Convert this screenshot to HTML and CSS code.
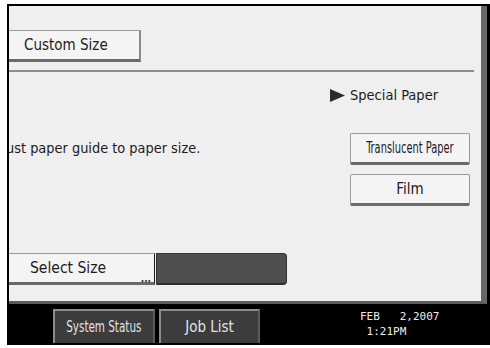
FILE: index.html
```html
<!DOCTYPE html>
<html lang="en">
<head>
    <meta charset="UTF-8">
    <title>Paper Size</title>
    <link rel="stylesheet" href="styles.css">
</head>
<body>
    <div class="screen">
        <div class="panel">
            <div class="custom-btn">Custom Size</div>
            <div class="rule"></div>

            <div class="middle">
                <div class="hint"><span>ust paper guide to paper size.</span></div>
                <div class="options">
                    <div class="special">
                        <svg width="15" height="13" viewBox="0 0 15 13"><polygon points="0,0 15,6.5 0,13" fill="#2b2b2b"/></svg>
                        <span>Special Paper</span>
                    </div>
                    <div class="opt-btn"><span class="squeeze">Translucent Paper</span></div>
                    <div class="opt-btn film">Film</div>
                </div>
            </div>

            <div class="select-row">
                <div class="select-btn">Select Size<span class="dots">...</span></div>
                <div class="size-box"></div>
            </div>
        </div>

        <div class="taskbar">
            <div class="task-btn"><span class="squeeze status">System Status</span></div>
            <div class="task-btn">Job List</div>
            <div class="clock">FEB   2,2007
 1:21PM</div>
        </div>
    </div>
</body>
</html>
```

FILE: styles.css
```css
* {
    margin: 0;
    padding: 0;
    box-sizing: border-box;
}

body {
    background: #fff;
    font-family: "DejaVu Sans Condensed", "DejaVu Sans", sans-serif;
    color: #1c1c1c;
}

.screen {
    margin: 4px 0 0 7px;
    width: 483px;
    height: 341px;
    background: #000;
    padding: 2px 3px 0 2px;
}

.panel {
    height: 298px;
    background: #efefef;
    border-right: 6px solid #676767;
    border-bottom: 3px solid #5c5c5c;
    display: flex;
    flex-direction: column;
}

.custom-btn {
    margin-top: 24px;
    width: 132px;
    height: 32px;
    background: #f4f4f4;
    border-top: 1px solid #9a9a9a;
    border-right: 2px solid #8a8a8a;
    border-bottom: 3px solid #6a6a6a;
    padding-left: 15px;
    display: flex;
    align-items: center;
    font-size: 15px;
}

.rule {
    margin-top: 8px;
    margin-right: 7px;
    height: 2px;
    background: #8d8d8d;
}

.middle {
    height: 135px;
    display: flex;
    justify-content: space-between;
}

.hint {
    margin-top: 66px;
    width: 220px;
    height: 20px;
    overflow: hidden;
    font-size: 14.4px;
    line-height: 20px;
    white-space: nowrap;
}

.hint span {
    display: block;
    margin-left: -3px;
}

.options {
    width: 120px;
    margin-right: 11px;
    display: flex;
    flex-direction: column;
}

.special {
    margin-top: 14px;
    margin-left: -20px;
    height: 18px;
    display: flex;
    align-items: center;
    gap: 5px;
    font-size: 14.5px;
}

.opt-btn {
    margin-top: 29px;
    height: 32px;
    background: #f4f4f4;
    border: 1px solid #9a9a9a;
    border-bottom: 3px solid #6a6a6a;
    border-radius: 2px;
    display: flex;
    align-items: center;
    justify-content: center;
    font-size: 15px;
}

.opt-btn.film {
    margin-top: 9px;
}

.squeeze {
    display: inline-block;
    transform: scaleX(0.73);
    white-space: nowrap;
}

.squeeze.status {
    transform: scaleX(0.77);
}

.select-row {
    margin-top: 46px;
    height: 32px;
    display: flex;
}

.select-btn {
    position: relative;
    width: 146px;
    background: #f4f4f4;
    border-top: 1px solid #9a9a9a;
    border-right: 1px solid #1c1c1c;
    border-bottom: 3px solid #6a6a6a;
    padding-left: 21px;
    display: flex;
    align-items: center;
    font-size: 15.5px;
}

.dots {
    position: absolute;
    right: 3px;
    bottom: -2px;
    font-size: 10px;
    font-weight: bold;
    color: #333;
}

.size-box {
    margin-left: 1px;
    width: 131px;
    background: #4f4f4f;
    border: 1px solid #333;
    border-bottom: 2px solid #2e2e2e;
    border-radius: 0 4px 4px 0;
}

.taskbar {
    height: 41px;
    padding: 5px 0 0 44px;
    display: flex;
    gap: 4px;
}

.task-btn {
    height: 34px;
    width: 102px;
    background: #3c3c3c;
    border-top: 2px solid #8c8c8c;
    border-left: 2px solid #8c8c8c;
    border-right: 2px solid #5a5a5a;
    display: flex;
    align-items: center;
    justify-content: center;
    color: #e2e2e2;
    font-size: 15px;
    white-space: nowrap;
}

.task-btn + .task-btn {
    width: 101px;
}

.clock {
    margin-left: 96px;
    padding-top: 0;
    font-family: "DejaVu Sans Mono", monospace;
    font-size: 11px;
    line-height: 15px;
    white-space: pre;
    color: #ececec;
}
```
